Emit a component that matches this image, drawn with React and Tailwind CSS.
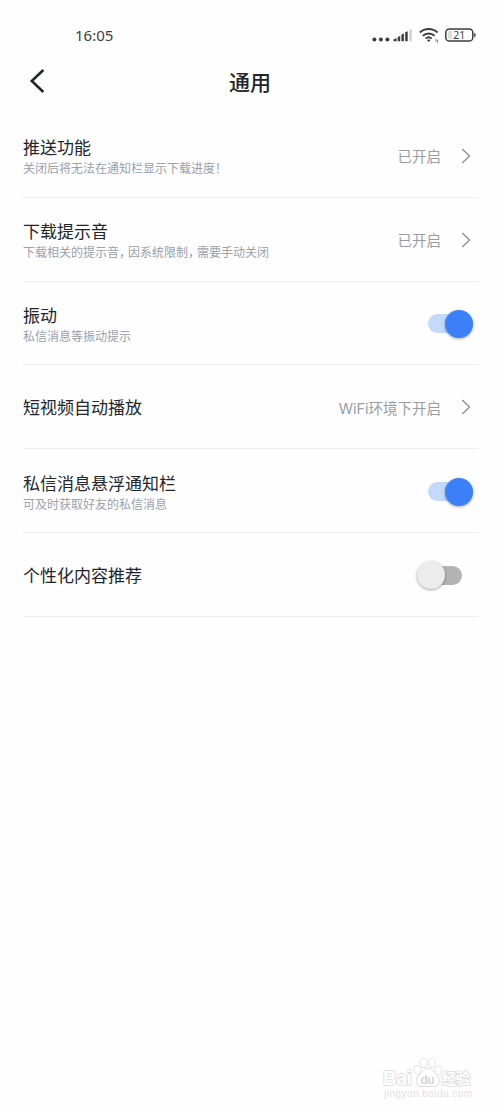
import { useState } from "react";

const initialItems = [
  { id: "push", title: "推送功能", desc: "关闭后将无法在通知栏显示下载进度！", value: "已开启" },
  { id: "sound", title: "下载提示音", desc: "下载相关的提示音，因系统限制，需要手动关闭", value: "已开启" },
  { id: "vibrate", title: "振动", desc: "私信消息等振动提示", on: true },
  { id: "autoplay", title: "短视频自动播放", value: "WiFi环境下开启" },
  { id: "float", title: "私信消息悬浮通知栏", desc: "可及时获取好友的私信消息", on: true },
  { id: "recommend", title: "个性化内容推荐", on: false },
];

const StatusBar = () => (
  <div className="h-[50px] pt-5 pl-[75px] pr-[24px] flex items-center justify-between text-[#3d3d3d]">
    <span className="font-['Noto_Sans','Noto_Sans_CJK_SC',sans-serif] text-[15px] leading-[30px]">16:05</span>
    <div className="flex items-center">
      {/* Signal */}
      <svg width="42" height="20" viewBox="0 0 42 20" fill="currentColor">
        <circle cx="2.400" cy="14.400" r="2" />
        <circle cx="8.900" cy="14.400" r="2" />
        <circle cx="15.400" cy="14.400" r="2" />
        <path d="M21.500 16.200v-1.200q0-.8.7-1l2.400-.8v3zM25.700 11.900l2.500-.9v5.200h-2.500zM29.400 9.600l2.500-1v7.600h-2.500zM33.200 7.200l2.500-1v10h-2.500z" />
        <path d="M37.300 5l2.500-1.200v12.400h-2.500z" fill="#cfcfcf" />
      </svg>
      {/* Wifi */}
      <svg className="ml-[5px]" width="21" height="20" viewBox="0 0 21 20" fill="none" stroke="currentColor">
        <path d="M.8 7.500a13 13 0 0 1 17.800 0M3.800 10.800a8.700 8.700 0 0 1 11.800 0M6.700 13.600a4.600 4.600 0 0 1 6 0" strokeWidth="1.900" />
        <path d="M7.900 15.100q1.800-1.300 3.600 0l-1.800 2z" fill="currentColor" stroke="none" />
        <path d="M17 13.800v3M18.600 14.800v3" strokeWidth=".9" stroke="#777" />
      </svg>
      {/* Battery */}
      <svg className="ml-[4px]" width="32" height="20" viewBox="0 0 32 20">
        <rect x="1.800" y="4" width="27" height="12" rx="3.600" fill="none" stroke="currentColor" strokeWidth="1.500" />
        <rect x="3.800" y="6" width="4.500" height="8" rx="1" fill="#dedede" />
        <path d="M30.200 7.800q1.500.5 1.500 2.200t-1.500 2.200z" fill="currentColor" />
        <text x="15.300" y="13.900" textAnchor="middle" fontFamily="Noto Sans" fontSize="10.500" fill="currentColor">21</text>
      </svg>
    </div>
  </div>
);

const Description = ({ text }) => (
  <p className="text-xs leading-[18px] text-[#9ba0aa]">
    {text.split(/([，！])/).map((part, i) => {
      if (part === "，") return <span key={i} className="tracking-[-3px]">{part}</span>;
      return part;
    })}
  </p>
);

const Toggle = ({ on, onClick }) => (
  <button
    type="button"
    role="switch"
    aria-checked={on}
    onClick={onClick}
    className={`mt-0.5 flex h-7 w-[45px] items-center ${on ? "mr-[5px]" : "mr-4"}`}
  >
    <span className={`flex h-[19px] w-full items-center rounded-full ${on ? "justify-end bg-[#c3d9fe]" : "bg-[#b3b3b3]"}`}>
      <span
        className={`size-7 shrink-0 rounded-full shadow-[0_1px_3px_rgba(0,0,0,0.35)] ${on ? "bg-[#3c80f7]" : "bg-[#ececec]"}`}
      />
    </span>
  </button>
);

const Watermark = () => (
  <svg width="92" height="48" viewBox="0 0 92 48" fill="#fff" stroke="#dcdcdc" strokeWidth="1.600" strokeLinejoin="round" paintOrder="stroke" fontFamily="Liberation Sans, sans-serif">
    <text x="0" y="30" fontSize="20" fontWeight="bold" textLength="29" lengthAdjust="spacingAndGlyphs">Bai</text>
    <ellipse cx="34.500" cy="15" rx="3.200" ry="4" transform="rotate(-15 34.500 15)" />
    <ellipse cx="40.500" cy="7.700" rx="3.200" ry="4.400" />
    <ellipse cx="48.700" cy="7.700" rx="3.200" ry="4.400" />
    <ellipse cx="55" cy="15.500" rx="3.200" ry="4.200" transform="rotate(15 55 15.500)" />
    <path d="M44.500 13.500c-4 0-4.700 3.500-7.500 5.800-4 3.200-5 11 1 11.800h13.500c6-.8 5.500-8.300 1.500-11.500-3-2.500-4-6.100-8.500-6.100z" />
    <text x="37.500" y="28.500" fontSize="12" fill="#d6d6d6" stroke="none" fontWeight="bold" textLength="14">du</text>
    <text x="58.500" y="29" fontSize="15" fontWeight="bold" textLength="29" fontFamily="Noto Sans CJK SC">经验</text>
    <text x="1" y="41.500" fontSize="10" fill="#e2e2e2" stroke="none" textLength="88">jingyan.baidu.com</text>
  </svg>
);

const App = () => {
  const [items, setItems] = useState(initialItems);

  const handleToggle = (id) => {
    setItems(items.map((item) => (item.id === id ? { ...item, on: !item.on } : item)));
  };

  return (
    <div lang="zh-CN" className="flex h-[1111px] w-[500px] flex-col overflow-hidden bg-[#fefefe] font-['Noto_Sans_CJK_SC',sans-serif] text-[#22252d]">
      <StatusBar />

      {/* Header */}
      <header className="grid h-[64px] grid-cols-[100px_1fr_100px] items-center pb-0.5">
        <svg className="ml-[29px]" width="18" height="28" viewBox="0 0 18 28" fill="none" stroke="#22252d" strokeWidth="2.600">
          <path d="M14.300 3L2.800 14l11.500 11" />
        </svg>
        <h1 className="text-center text-[21px] font-medium leading-8">通用</h1>
      </header>

      {/* Settings */}
      <ul>
        {items.map((item) => (
          <li key={item.id} className="h-[83.8px] pl-[23px] pr-[22px]">
            <div className="flex h-full items-center justify-between border-b border-[#eeeff2]">
              <div className={item.desc ? "pt-[2px]" : "pt-px"}>
                <h2 className="text-[17px] leading-[24px]">{item.title}</h2>
                {item.desc && <Description text={item.desc} />}
              </div>
              {item.value ? (
                <div className="flex items-center pr-[6px] pt-px">
                  <span className="pt-[3px] font-[Inter,'Noto_Sans_CJK_SC',sans-serif] text-[14.5px] leading-5 text-[#989da8]">
                    {item.value}
                  </span>
                  <svg className="ml-[19px]" width="12" height="18" viewBox="0 0 12 18" fill="none" stroke="#8c8c8c" strokeWidth="1.300">
                    <path d="M2.300 2l7.200 7-7.200 7" />
                  </svg>
                </div>
              ) : (
                <Toggle on={item.on} onClick={() => handleToggle(item.id)} />
              )}
            </div>
          </li>
        ))}
      </ul>

      <div className="mt-auto flex justify-end pr-[25px] pb-[8px]">
        <Watermark />
      </div>
    </div>
  );
};

export default App;
